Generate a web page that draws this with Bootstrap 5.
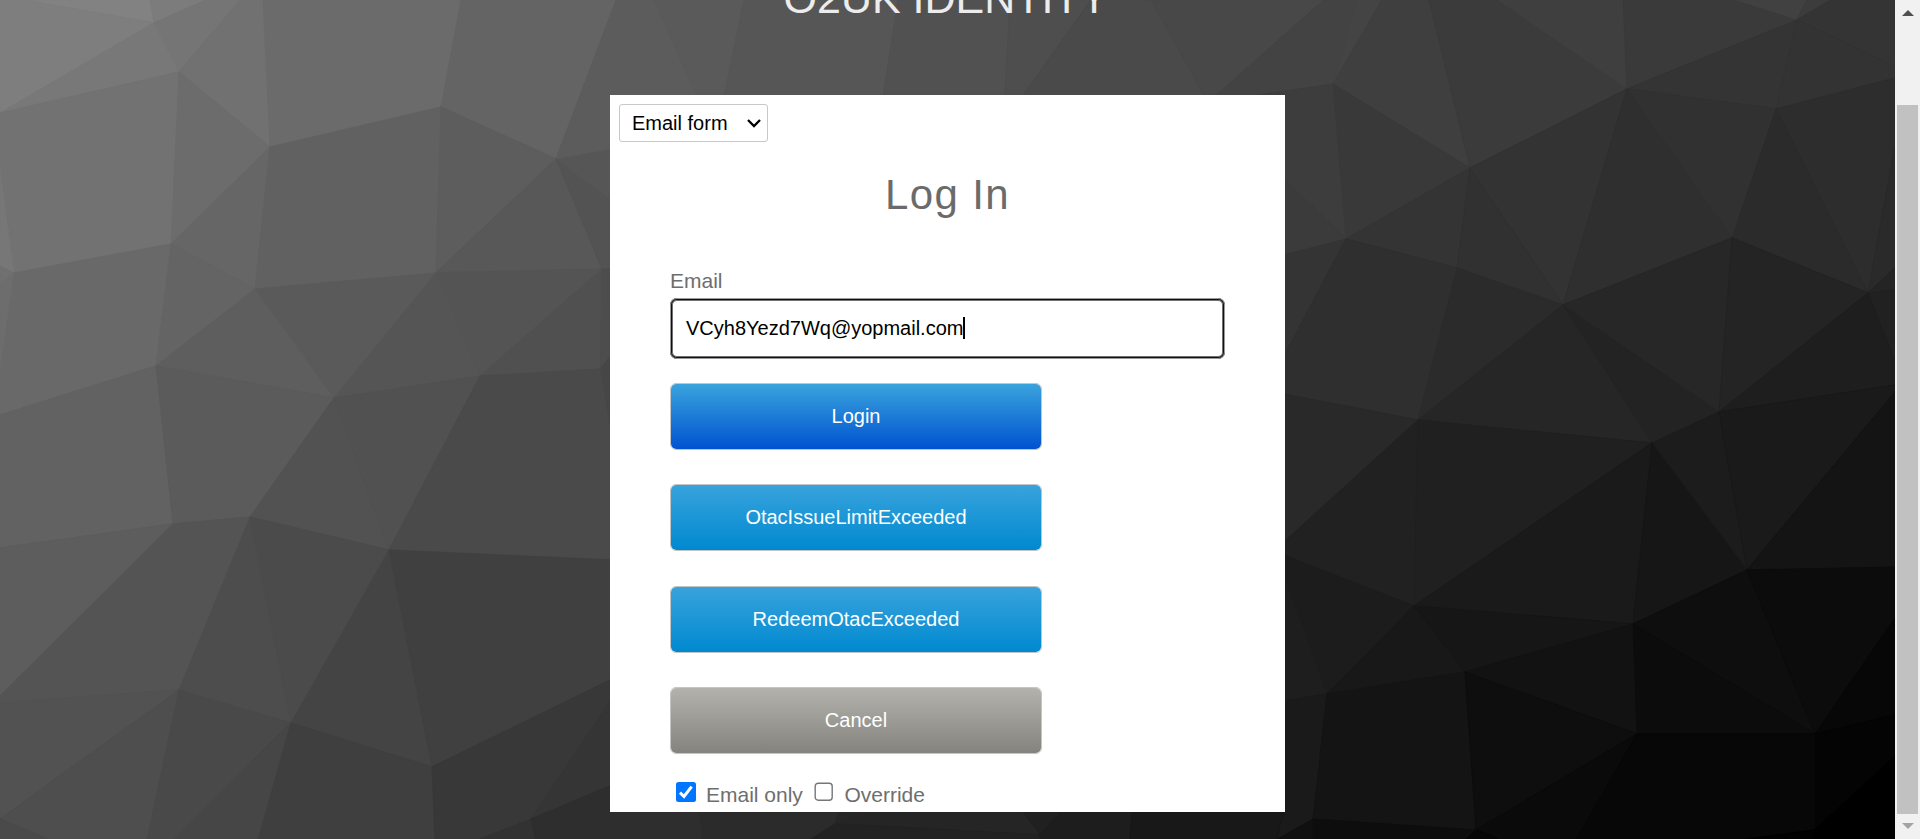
<!DOCTYPE html>
<html lang="en">
<head>
<meta charset="utf-8">
<title>O2UK Identity</title>
<link href="https://cdn.jsdelivr.net/npm/bootstrap@5.3.0/dist/css/bootstrap.min.css" rel="stylesheet">
<style>
html, body { height: 839px; overflow: hidden; }
body { background: #000; font-family: "Liberation Sans", Arial, sans-serif; color: #6e6e6e; }
.stage { height: 839px; }
.mesh { position: absolute; inset: 0; z-index: 0; }
.page-area { z-index: 1; }
.brand-title { font-size: 43px; line-height: 48px; height: 48px; margin: -26px 0 73px; padding-right: 3px; color: #ececec; }
.login-panel { width: 675px; height: 717px; background: #fff; padding: 9px 60px 0; }
.form-pick { width: 149px; height: 38px; margin-left: -51px; padding: 0 3px 0 12px; border: 1px solid #c8c8c8; border-radius: 3px; font-size: 20px; color: #000; }
.login-heading { font-size: 42px; line-height: 48px; letter-spacing: 1.4px; margin: 29px 0 50px; color: #6b6b6b; }
.field-label { font-size: 21px; line-height: 24px; margin-bottom: 5px; }
.email-box { height: 61px; border: 2px solid #101010; outline: 1px solid #9a9a9a; outline-offset: -1px; box-shadow: inset 0 0 0 1px #10101099; border-radius: 7px; padding: 0 0 1px 14px; font-size: 20px; color: #000; margin-bottom: 24px; }
.caret { width: 2px; height: 22px; background: #000; }
.btn-act { width: 372px; height: 67px; padding: 0 0 1px; border: 1px solid #c3c6c8; border-radius: 6px; font-size: 20px; color: #fff; background: linear-gradient(#38a3dc, #0089d0) padding-box; }
.btn-act:hover { color: #fff; }
.btn-login { background: linear-gradient(#3aa3dd, #0053d0) padding-box; }
.btn-quit { background: linear-gradient(#b3b2ad, #84837d) padding-box; }
.act-list { gap: 34.4px; }
.checks { font-size: 21px; line-height: 26px; margin-top: 27.5px; padding-left: 6px; }
.check-name { padding: 0 11.5px 0 10px; }
.scroll-col { width: 25px; background: #f1f1f1; padding: 10px 0; z-index: 1; }
.scroll-thumb { width: 21px; height: 709px; background: #c1c1c1; margin-top: 89px; margin-bottom: 9px; }
</style>
</head>
<body>
<div class="stage d-flex position-relative overflow-hidden">
<svg class="mesh" width="1920" height="839" viewBox="0 0 1920 839">
<defs><linearGradient id="base" x1="0" y1="0" x2="1" y2=".45"><stop offset="0" stop-color="#808080"/><stop offset="1" stop-color="#080808"/></linearGradient></defs>
<rect width="1920" height="839" fill="url(#base)"/>
<g id="facets" transform="translate(0 .8)"></g>
</svg>
<main class="page-area flex-grow-1 d-flex flex-column align-items-center">
<h1 class="brand-title fw-normal">O2UK IDENTITY</h1>
<form class="login-panel d-flex flex-column">
<div class="form-pick d-flex align-items-center justify-content-between flex-shrink-0"><span>Email form</span>
<svg width="20" height="12" viewBox="0 0 20 12"><path d="M4 3l6 6 6-6" fill="none" stroke="#000" stroke-width="2.3"/></svg></div>
<h2 class="login-heading fw-normal text-center">Log In</h2>
<label class="field-label">Email</label>
<div class="email-box d-flex align-items-center flex-shrink-0"><span>VCyh8Yezd7Wq@yopmail.com</span><span class="caret"></span></div>
<div class="act-list d-flex flex-column">
<button type="button" class="btn btn-act btn-login">Login</button>
<button type="button" class="btn btn-act">OtacIssueLimitExceeded</button>
<button type="button" class="btn btn-act">RedeemOtacExceeded</button>
<button type="button" class="btn btn-act btn-quit">Cancel</button>
</div>
<div class="checks d-flex">
<svg width="20" height="20" viewBox="0 0 20 20"><rect width="20" height="20" rx="2.5" fill="#0075ff"/><path d="M4 10.6l4 3.9L15.6 4.6" fill="none" stroke="#fff" stroke-width="3"/></svg>
<span class="check-name">Email only</span>
<svg width="20" height="20" viewBox="0 0 20 20"><rect x="1.2" y="1.2" width="17" height="17" rx="3" fill="#fff" stroke="#767676" stroke-width="1.4"/></svg>
<span class="check-name">Override</span>
</div>
</form>
</main>
<aside class="scroll-col d-flex flex-column align-items-center">
<svg width="12" height="6" viewBox="0 0 12 6"><path d="M0 6L6 0l6 6z" fill="#505050"/></svg>
<div class="scroll-thumb"></div>
<svg width="12" height="6" viewBox="0 0 12 6"><path d="M0 0l6 6 6-6z" fill="#a3a3a3"/></svg>
</aside>
</div>
<script src="https://cdn.jsdelivr.net/npm/bootstrap@5.3.0/dist/js/bootstrap.bundle.min.js"></script>
<script>
// Low-poly backdrop: each facet is a grey level followed by its corner points.
const facets = `
82 24,-1 150,-1 154,22
7e 0,-1 24,-1 154,22 0,112
78 154,22 0,112 179,71
7c 150,-1 206,-1 154,22
75 154,22 179,71 240,-1 206,-1
71 179,71 270,146 263,-1 240,-1
6b 270,146 441,106 461,-1 263,-1
64 441,106 556,158 616,-1 461,-1
72 0,112 179,71 171,243 14,272 0,167
77 0,167 14,272 0,265
70 0,265 14,272 0,283
6c 179,71 270,146 171,243
66 270,146 171,243 255,288
61 270,146 441,106 436,272 255,288
5d 441,106 556,158 436,272
58 556,158 436,272 602,268
53 556,158 602,268 612,268 612,200
56 556,158 612,200 612,148
5c 556,158 612,148 612,95 697,95 654,-1 616,-1
69 14,272 171,243 156,365 0,414 0,368
6d 14,272 0,283 0,368
64 171,243 255,288 156,365
5e 255,288 156,365 334,397
5a 255,288 436,272 334,397
55 436,272 334,397 480,375
54 436,272 602,268 480,375
50 602,268 480,375 600,368
4d 602,268 600,368 612,353 612,268
46 600,368 612,353 612,440
62 0,414 156,365 173,523 0,547
5b 156,365 334,397 250,516 173,523
52 334,397 250,516 389,549
51 334,397 480,375 389,549
4a 480,375 600,368 612,440 612,559 389,549
5d 0,547 173,523 0,695
54 173,523 250,516 179,689 0,702 0,695
4d 250,516 179,689 291,722
4b 250,516 291,722 389,549
44 389,549 291,722 432,766
40 389,549 432,766 612,678 612,559
52 0,702 179,689 0,818
4e 179,689 0,818 50,839 147,839
4a 0,818 50,839 0,839
49 179,689 147,839 174,839 291,722
46 291,722 174,839 258,839
3f 291,722 258,839 435,839 432,766
38 432,766 435,839 478,839 531,818 612,698 612,678
35 531,818 612,698 612,784
32 531,818 478,839 536,839
2e 531,818 536,839 703,839 700,811 612,811 612,784
5a 654,-1 744,-1 724,96 697,96
56 744,-1 898,-1 883,96 724,96
51 898,-1 1010,-1 1005,96 883,96
4e 1010,-1 1091,-1 1022,96 1005,96
4a 1091,-1 1151,-1 1205,96 1022,96
48 1151,-1 1324,-1 1214,96 1205,96
43 1324,-1 1357,-1 1333,83 1247,96 1214,96
44 1357,-1 1382,-1 1333,83
3f 1382,-1 1429,-1 1470,167 1333,83
3b 1429,-1 1497,-1 1627,88 1470,167
3f 1497,-1 1623,-1 1627,88
3a 1623,-1 1735,-1 1797,19 1627,88
41 1735,-1 1807,-1 1797,19
3c 1807,-1 1831,-1 1797,19
34 1831,-1 1895,-1 1895,66 1797,19
33 1797,19 1895,66 1895,77 1776,108
34 1797,19 1776,108 1627,88
3d 1333,83 1247,96 1284,96 1284,178 1346,238
3b 1284,178 1346,238 1284,254
39 1333,83 1470,167 1346,238
34 1470,167 1346,238 1457,267
31 1470,167 1457,267 1563,304
33 1470,167 1627,88 1563,304
2f 1627,88 1563,304 1732,237
31 1627,88 1776,108 1732,237
2b 1776,108 1732,237 1868,292
2d 1776,108 1895,77 1895,145 1868,292
2a 1895,145 1868,292 1895,267
24 1868,292 1895,267 1895,289
21 1868,292 1895,289 1895,360
34 1346,238 1284,254 1284,355
2f 1346,238 1284,355 1284,393 1418,419 1457,267
2b 1457,267 1563,304 1418,419
26 1563,304 1418,419 1652,442
23 1563,304 1652,442 1719,411
27 1563,304 1732,237 1719,411
24 1732,237 1868,292 1719,411
1e 1868,292 1719,411 1895,384 1895,360
29 1284,393 1418,419 1284,541
21 1418,419 1284,541 1284,554 1414,605
20 1418,419 1652,442 1414,605
1a 1652,442 1414,605 1633,623
16 1652,442 1633,623 1747,569
1c 1652,442 1719,411 1747,569
1a 1719,411 1895,384 1895,391 1747,569
14 1895,391 1747,569 1895,566
1c 1284,554 1414,605 1327,693 1284,575
1e 1284,575 1327,693 1284,700
18 1414,605 1327,693 1465,671
16 1414,605 1465,671 1633,623
12 1465,671 1633,623 1637,733
0e 1633,623 1747,569 1815,733
0c 1633,623 1637,733 1815,733
0c 1747,569 1895,566 1895,617 1815,733
07 1895,617 1815,733 1895,714
04 1815,733 1895,714 1895,755 1815,829
00 1895,755 1815,829 1813,839 1895,839
1a 1284,700 1327,693 1313,818 1276,839 1284,811
14 1327,693 1465,671 1476,829 1313,818
0e 1465,671 1637,733 1476,829
0a 1637,733 1476,829 1500,839 1576,839
07 1637,733 1815,733 1815,829 1740,839 1576,839
02 1815,829 1740,839 1813,839
10 1313,818 1276,839 1313,839
0d 1313,818 1476,829 1465,839 1313,839
07 1476,829 1465,839 1500,839
2b 700,811 838,811 835,823 810,839 703,839
26 838,811 870,811 835,823
25 870,811 1023,811 1040,834 835,823
22 835,823 1040,834 1040,839 810,839
20 1023,811 1061,811 1040,834
1d 1061,811 1132,811 1130,839 1040,839 1040,834
18 1132,811 1284,811 1276,839 1130,839
`;
document.getElementById('facets').innerHTML = facets.trim().split('\n').map(row => {
  const [g, ...pts] = row.split(' ');
  const c = '#' + g + g + g;
  return `<polygon points="${pts.join(' ')}" fill="${c}" stroke="${c}" stroke-width=".6"/>`;
}).join('');
</script>
</body>
</html>
